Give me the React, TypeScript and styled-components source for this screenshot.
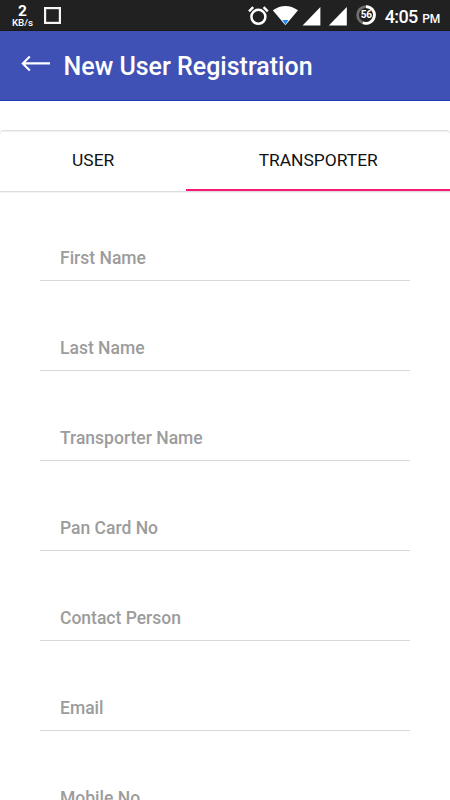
import React from "react";
import styled, { createGlobalStyle } from "styled-components";

const Global = createGlobalStyle`
  * { box-sizing: border-box; }
  body { margin: 0; background: #fff; font-family: Roboto, sans-serif; overflow: hidden; }
`;

const Screen = styled.div`
  width: 450px;
  height: 800px;
  overflow: hidden;
  background: #fff;
  display: flex;
  flex-direction: column;
`;

const StatusBar = styled.div`
  height: 31px;
  flex: none;
  background: #212121;
  border-bottom: 1px solid #1b1919;
  color: #fff;
  display: flex;
  justify-content: space-between;
  padding: 0 10px 0 11px;
`;

const StatusGroup = styled.div`
  display: flex;
  align-items: flex-start;
`;

const Speed = styled.div`
  width: 23px;
  margin-right: 10px;
  padding-top: 5px;
  display: flex;
  flex-direction: column;
  align-items: center;
  font-weight: 700;
`;

const SpeedValue = styled.span`
  font-size: 15.5px;
  line-height: 13px;
`;

const SpeedUnit = styled.span`
  font-size: 9.8px;
  line-height: 10px;
  font-weight: 500;
`;

const StatusIcon = styled.svg`
  display: block;
  flex: none;
`;

const AppIcon = styled(StatusIcon)`
  margin-top: 7px;
`;

const Battery = styled.div`
  width: 20px;
  height: 20px;
  margin: 5px 8.5px 0 8px;
  display: grid;
  place-items: center;
  font-size: 10px;
  font-weight: 700;
  line-height: 20px;
  letter-spacing: -0.4px;

  > * {
    grid-area: 1 / 1;
  }
`;

const Clock = styled.div`
  display: flex;
  align-items: baseline;
  font-size: 18px;
  font-weight: 500;
  line-height: 34px;
  letter-spacing: -0.6px;
`;

const Meridiem = styled.span`
  font-size: 12px;
  margin-left: 4.5px;
  letter-spacing: -0.2px;
`;

const AppBar = styled.header`
  height: 70px;
  flex: none;
  background: #3f51b5;
  border-bottom: 1px solid #1a3cb0;
  display: flex;
  align-items: flex-start;
  color: #fff;
  padding-left: 21px;
`;

const BackIcon = styled.svg`
  display: block;
  margin-top: 22px;
`;

const Title = styled.h1`
  margin: 0 0 0 12.5px;
  font-size: 25px;
  font-weight: 500;
  line-height: 71px;
`;

const Tabs = styled.nav`
  margin-top: 29px;
  height: 62px;
  flex: none;
  display: flex;
  border-top: 1px solid #dedede;
  border-bottom: 1px solid #dedede;
  border-radius: 4px 4px 0 0;
  box-shadow: 0 1px 0 #f3f3f3, inset 0 1px 0 #f3f3f3;
`;

const Tab = styled.div<{ $active?: boolean }>`
  flex: ${(p) => (p.$active ? "1" : "0 0 186.4px")};
  text-align: center;
  font-size: 17.4px;
  line-height: 58px;
  color: #111;
  border-bottom: ${(p) => (p.$active ? "2px solid #f9187a" : "0")};
`;

const Form = styled.main`
  padding: 42px 40px 0;
  display: flex;
  flex-direction: column;
  gap: 43px;
`;

const Field = styled.div`
  height: 47px;
  flex: none;
  border-bottom: 1px solid #d8d8d8;
  padding-left: 20px;
  font-size: 17.5px;
  font-weight: 500;
  line-height: 48px;
  color: #9c9c9c;
`;

const fields = [
  "First Name",
  "Last Name",
  "Transporter Name",
  "Pan Card No",
  "Contact Person",
  "Email",
  "Mobile No",
];

export default function App() {
  return (
    <Screen>
      <Global />
      <StatusBar>
        <StatusGroup>
          <Speed>
            <SpeedValue>2</SpeedValue>
            <SpeedUnit>KB/s</SpeedUnit>
          </Speed>
          <AppIcon width="17" height="17" viewBox="0 0 17 17">
            <rect x="1.1" y="1.1" width="14.8" height="14.8" fill="none" stroke="#f5f5f5" strokeWidth="2.2" />
          </AppIcon>
        </StatusGroup>
        <StatusGroup>
          <StatusIcon width="100" height="30" viewBox="0 0 100 30">
            <g fill="none" stroke="#fff">
              <circle cx="10.4" cy="16.8" r="7" strokeWidth="2.5" />
              <path d="M1 11.3L5.2 7.2M19.8 11.3L15.6 7.2" strokeWidth="2.4" />
            </g>
            <path d="M24.8 10.2Q37.4 1.6 50 10.2L37.4 25.2Z" fill="#fff" />
            <path d="M34.4 20H40.4L37.4 24.8Z" fill="#1e88f5" />
            <path d="M72.4 7V25.5H54.6Z" fill="#fff" />
            <path d="M98.8 7V25.5H80.8Z" fill="#fff" />
          </StatusIcon>
          <Battery>
            <StatusIcon width="20" height="20" viewBox="0 0 20 20">
              <circle cx="10" cy="10" r="8.4" fill="none" stroke="#6f6f6f" strokeWidth="2.8" />
              <path d="M10 1.6A8.4 8.4 0 1 1 6.9 17.8" fill="none" stroke="#fff" strokeWidth="2.8" />
            </StatusIcon>
            <span>56</span>
          </Battery>
          <Clock>
            4:05<Meridiem>PM</Meridiem>
          </Clock>
        </StatusGroup>
      </StatusBar>
      <AppBar>
        <BackIcon width="30" height="20" viewBox="0 0 30 20">
          <path d="M29 10.4H2M8.8 3.4L1.8 10.4L8.8 17.4" fill="none" stroke="#fff" strokeWidth="2.1" />
        </BackIcon>
        <Title>New User Registration</Title>
      </AppBar>
      <Tabs>
        <Tab>USER</Tab>
        <Tab $active>TRANSPORTER</Tab>
      </Tabs>
      <Form>
        {fields.map((f) => (
          <Field key={f}>{f}</Field>
        ))}
      </Form>
    </Screen>
  );
}
